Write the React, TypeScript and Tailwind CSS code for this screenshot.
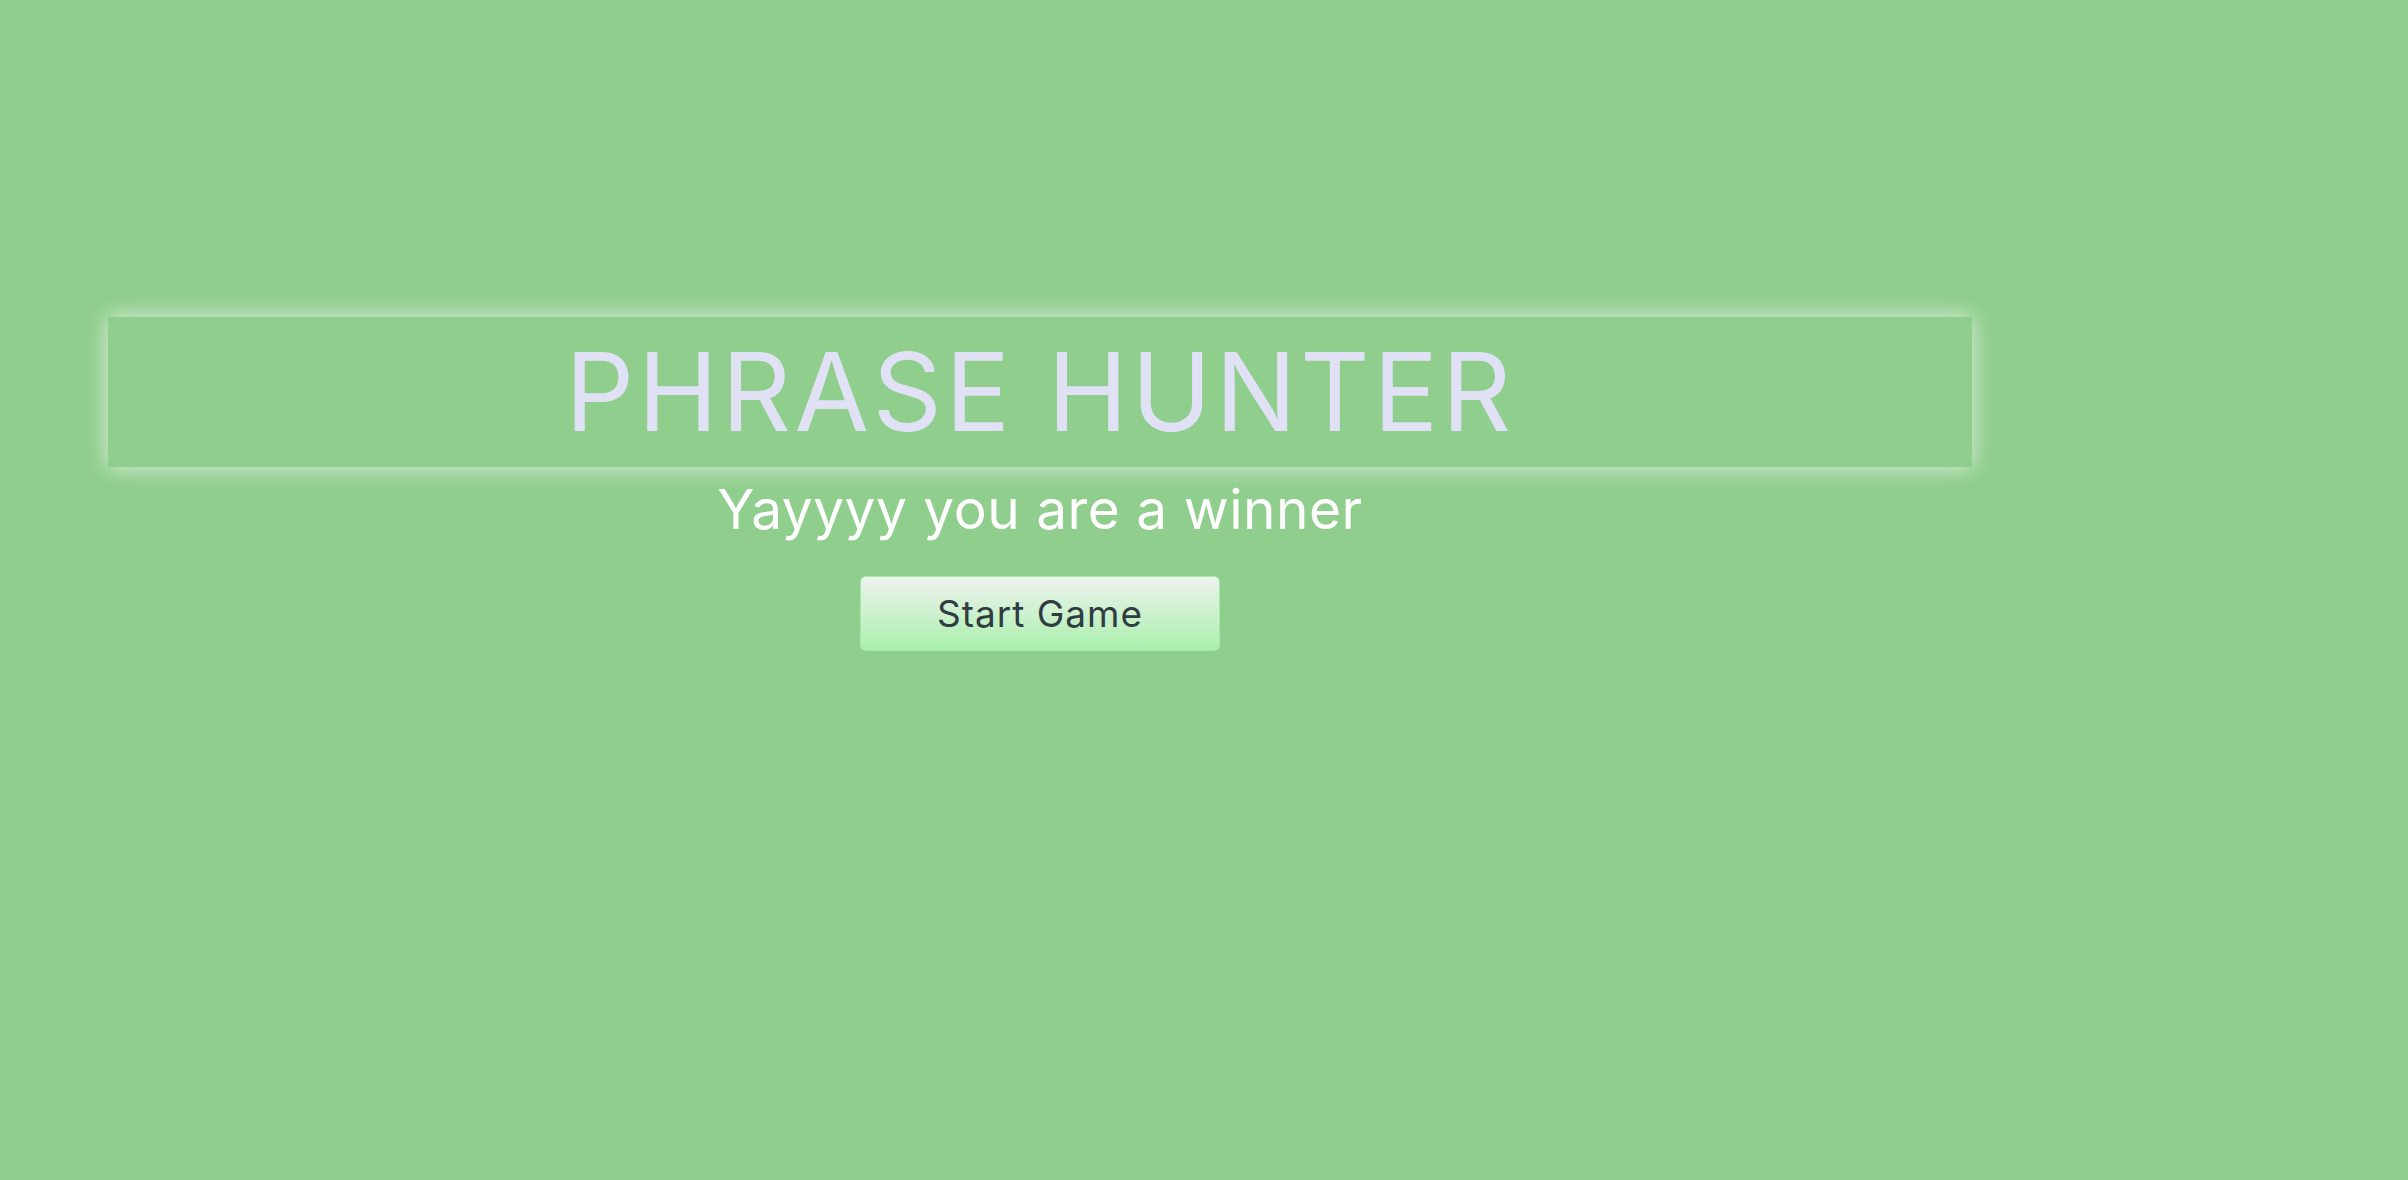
import React from "react";

const App: React.FC = () => {
  return (
    <div
      className="min-h-[1180px] w-full bg-[#8fce8c] pt-[317px]"
      style={{ fontFamily: "Inter, 'Open Sans', sans-serif" }}
    >
      <div className="ml-[108px] w-[1864px] flex flex-col items-center">
        {/* title banner */}
        <div className="w-full h-[150px] flex items-center justify-center shadow-[0_0_22px_rgba(240,245,240,0.85)]">
          <h1 className="text-[108px] leading-none font-normal text-[#e0e1f5] tracking-[3.5px]">
            PHRASE HUNTER
          </h1>
        </div>
        <p className="mt-[8px] text-[55px] leading-tight text-white tracking-[0.5px]">Yayyyy you are a winner</p>
        <button className="mt-[32px] w-[360px] h-[75px] rounded-[6px] border border-[#a6eca9] bg-gradient-to-b from-[#eef2ee] to-[#a8efac] text-[37px] tracking-[1px] text-[#2f3c42]">
          Start Game
        </button>
      </div>
    </div>
  );
};

export default App;
